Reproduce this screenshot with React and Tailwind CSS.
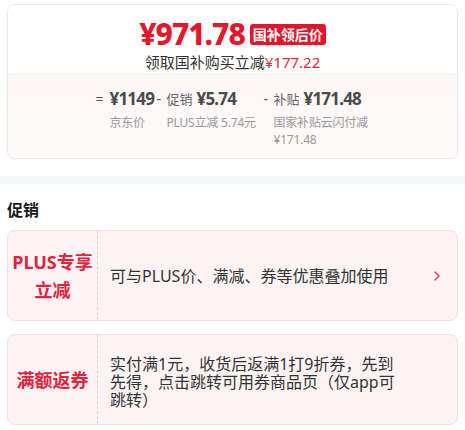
import React from 'react';

const font = { fontFamily: '"Noto Sans", "Noto Sans CJK SC", sans-serif' };

const Chevron = () => (
  <svg width="8" height="12" viewBox="0 0 8 12" fill="none">
    <path d="M2 2l4 4-4 4" stroke="#d64359" strokeWidth="1.4" strokeLinecap="round" strokeLinejoin="round" />
  </svg>
);

const PromoCard = ({ label, children, arrow }) => (
  <div className="flex h-[91px] rounded-[8px] border border-[#f5dde0] bg-[#fdf3f4]">
    <div className="flex w-[90px] shrink-0 items-center justify-center border-r border-dashed border-[#e9cdd1] px-1 text-center text-[18px] font-bold leading-[28px] text-[#e1233b]">
      {label}
    </div>
    <div className="flex flex-1 items-center justify-between pl-[12px] pr-[16px]">
      {children}
      {arrow && <Chevron />}
    </div>
  </div>
);

const Num = ({ tag, value }) => (
  <div className="flex h-[24px] items-center whitespace-nowrap">
    {tag && <span className="mr-[4px] text-[13px] leading-[24px] text-[#666]">{tag}</span>}
    <span className="text-[17px] font-bold leading-[24px] tracking-[-0.8px] text-[#4a4a4a]">{value}</span>
  </div>
);

const Col = ({ sign, signW, ml, w, tag, value, children }) => (
  <div className={`flex ${ml}`}>
    <span className={`${signW} text-[14px] leading-[24px] text-[#555]`}>{sign}</span>
    <div className={`flex ${w} flex-col`}>
      <Num tag={tag} value={value} />
      <span className="mt-[3px] whitespace-nowrap text-[12px] leading-[17px] tracking-[-0.2px] text-[#999]">{children}</span>
    </div>
  </div>
);

const App = () => {
  return (
    <div className="w-[465px] h-[430px] overflow-hidden bg-white" style={font}>
      <div className="mx-[7px] mt-[4px] overflow-hidden rounded-[8px] border border-[#f1e6e7] shadow-[0_1px_2px_rgba(0,0,0,0.04)]">
        <div className="h-[69px] bg-white pt-[11px]">
          <div className="flex h-[36px] items-center justify-center gap-[5px]">
            <span className="text-[30px] font-extrabold leading-[36px] tracking-[-1px] text-[#e4172c]">¥971.78</span>
            <span className="rounded-[3px] bg-[#e5162b] px-[3px] text-[14px] font-bold leading-[21px] text-white">国补领后价</span>
          </div>
          <div className="h-[20px] text-center text-[15px] leading-[20px] text-[#333]">
            领取国补购买立减<span className="text-[#e0263a]">¥177.22</span>
          </div>
        </div>
        <div className="h-[84px] border-t border-[#f8eded] bg-gradient-to-b from-[#fdf6f6] to-[#fefafa] pt-[12px]">
          <div className="flex justify-center">
            <Col sign="=" signW="w-[14px]" ml="" w="w-[44px]" value="¥1149">
              京东价
            </Col>
            <Col sign="-" signW="w-[10px]" ml="ml-[3px]" w="w-[94px]" tag="促销" value="¥5.74">
              PLUS立减 5.74元
            </Col>
            <Col sign="-" signW="w-[10px]" ml="ml-[3px]" w="w-[96px]" tag="补贴" value="¥171.48">
              国家补贴云闪付减
              <br />
              ¥171.48
            </Col>
          </div>
        </div>
      </div>

      <div className="mt-[17px] h-[8px] bg-[#f5f6f8]" />

      <div className="px-[7px] pt-[15px]">
        <div className="h-[22px] text-[16px] font-bold leading-[22px] text-[#1a1a1a]">促销</div>
        <div className="mt-[9px] flex flex-col gap-[13px]">
          <PromoCard
            label={
              <span>
                PLUS专享
                <br />
                立减
              </span>
            }
            arrow
          >
            <span className="text-[16px] leading-[22px] text-[#333]">可与PLUS价、满减、券等优惠叠加使用</span>
          </PromoCard>
          <PromoCard label="满额返券">
            <span className="w-[290px] pt-[4px] text-[16px] leading-[18px] text-[#333]">
              实付满1元，收货后返满1打9折券，先到先得，点击跳转可用券商品页（仅app可跳转）
            </span>
          </PromoCard>
        </div>
      </div>
    </div>
  );
};

export default App;
